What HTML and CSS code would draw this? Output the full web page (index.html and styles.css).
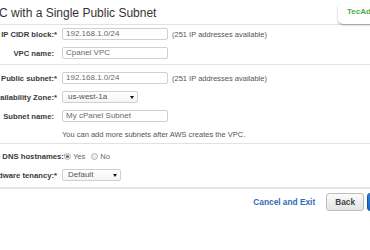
FILE: index.html
```html
<!DOCTYPE html>
<html lang="en">
<head>
	<meta charset="UTF-8">
	<title>Create VPC</title>
	<link rel="stylesheet" href="styles.css">
</head>
<body>
	<div class="badge">TecAdmin</div>
	<div class="wizard">
		<h2 class="title">VPC with a Single Public Subnet</h2>

		<div class="section s1">
			<div class="row">
				<span class="lbl">IP CIDR block:<span class="req">*</span></span>
				<span class="inp w-long">192.168.1.0/24</span>
				<span class="note">(251 IP addresses available)</span>
			</div>
			<div class="row">
				<span class="lbl">VPC name:</span>
				<span class="inp w-long">Cpanel VPC</span>
			</div>
		</div>

		<div class="section s2">
			<div class="row">
				<span class="lbl">Public subnet:<span class="req">*</span></span>
				<span class="inp w-long">192.168.1.0/24</span>
				<span class="note">(251 IP addresses available)</span>
			</div>
			<div class="row">
				<span class="lbl">Availability Zone:<span class="req">*</span></span>
				<span class="sel w-zone">us-west-1a<i class="arrow"></i></span>
			</div>
			<div class="row">
				<span class="lbl">Subnet name:</span>
				<span class="inp w-long">My cPanel Subnet</span>
			</div>
			<div class="row help">
				<span class="lbl"></span>
				<span class="note">You can add more subnets after AWS creates the VPC.</span>
			</div>
		</div>

		<div class="section s3">
			<div class="row">
				<span class="lbl">Enable DNS hostnames:<span class="req">*</span></span>
				<span class="radio checked"></span><span class="opt">Yes</span>
				<span class="radio"></span><span class="opt">No</span>
			</div>
			<div class="row">
				<span class="lbl">Hardware tenancy:<span class="req">*</span></span>
				<span class="sel w-ten">Default<i class="arrow"></i></span>
			</div>
		</div>

		<div class="footer">
			<a class="cancel" href="#">Cancel and Exit</a>
			<span class="btn">Back</span>
			<span class="btn primary">Create VPC</span>
		</div>
	</div>
</body>
</html>
```

FILE: styles.css
```css
body{
	margin: 0;
	background: #fff;
	overflow: hidden;
	font-family: "Liberation Sans", Arial, sans-serif;
	color: #444;
}
.wizard{
	margin-left: -25px;
}
.title{
	margin: 0;
	padding: 6px 0 4px 8px;
	font-size: 12px;
	line-height: 14px;
	font-weight: normal;
	color: #333;
}
.section{
	display: flex;
	flex-direction: column;
	gap: 7px;
	border-top: 1px solid #e2e2e2;
}
.s1{
	padding: 3px 0 5px;
}
.s2{
	padding: 7px 0 4px;
}
.s3{
	padding: 6px 0 6px;
}
.row{
	display: flex;
	align-items: center;
	height: 12px;
	font-size: 7.5px;
}
.row.help{
	height: 10px;
}
.lbl{
	width: 79px;
	padding-right: 3px;
	margin-right: 5px;
	text-align: right;
	white-space: nowrap;
	font-size: 7.7px;
	font-weight: bold;
	color: #3a3a3a;
	flex: none;
}
.req{
	margin-right: -3px;
}
.inp, .sel{
	box-sizing: border-box;
	height: 12px;
	line-height: 10px;
	border: 1px solid #cfcfcf;
	border-radius: 2px;
	font-size: 8px;
	color: #6a6a6a;
	background: #fff;
	flex: none;
}
.inp{
	padding-left: 3px;
}
.sel{
	display: flex;
	align-items: center;
	justify-content: space-between;
	padding: 0 3px 0 5px;
	color: #555;
	background: linear-gradient(#fff, #f4f4f4);
}
.arrow{
	width: 0;
	height: 0;
	border-left: 2px solid transparent;
	border-right: 2px solid transparent;
	border-top: 3px solid #111;
}
.w-long{
	width: 106px;
}
.w-zone{
	width: 76px;
}
.w-ten{
	width: 59px;
}
.note{
	margin-left: 4px;
	color: #555;
	white-space: nowrap;
}
.help .note{
	margin-left: 0;
}
.radio{
	box-sizing: border-box;
	width: 7px;
	height: 7px;
	margin-left: 2px;
	border: 1px solid #b5b5b5;
	border-radius: 50%;
	background: #ececec;
	display: flex;
	align-items: center;
	justify-content: center;
}
.radio.checked::after{
	content: "";
	width: 3px;
	height: 3px;
	border-radius: 50%;
	background: #6a6a6a;
}
.opt{
	margin: 0 4px 0 2px;
	color: #666;
	font-size: 7.5px;
}
.footer{
	display: flex;
	justify-content: flex-end;
	align-items: center;
	border-top: 2px solid #e6e6e6;
	padding-top: 4px;
	margin-right: -57px;
}
.cancel{
	font-size: 8.3px;
	font-weight: bold;
	color: #2f6cb8;
	text-decoration: none;
	margin-right: 11px;
}
.btn{
	box-sizing: border-box;
	height: 18px;
	line-height: 16px;
	padding: 0 8px;
	border: 1px solid #bdbdbd;
	border-radius: 3px;
	background: linear-gradient(#fbfbfb, #e4e4e4);
	font-size: 8.3px;
	font-weight: bold;
	color: #444;
}
.btn.primary{
	margin-left: 3px;
	width: 60px;
	border-color: #1257a6;
	background: linear-gradient(#2b80d8, #1666c1);
	color: #fff;
}
.badge{
	position: absolute;
	top: 3px;
	left: 338px;
	width: 56px;
	height: 21px;
	box-sizing: border-box;
	padding-left: 9px;
	line-height: 18px;
	background: #fff;
	border-radius: 5px;
	box-shadow: 0 1px 2px rgba(0, 0, 0, 0.35);
	font-size: 8px;
	font-weight: bold;
	color: #4cae4c;
	z-index: 2;
}
```
